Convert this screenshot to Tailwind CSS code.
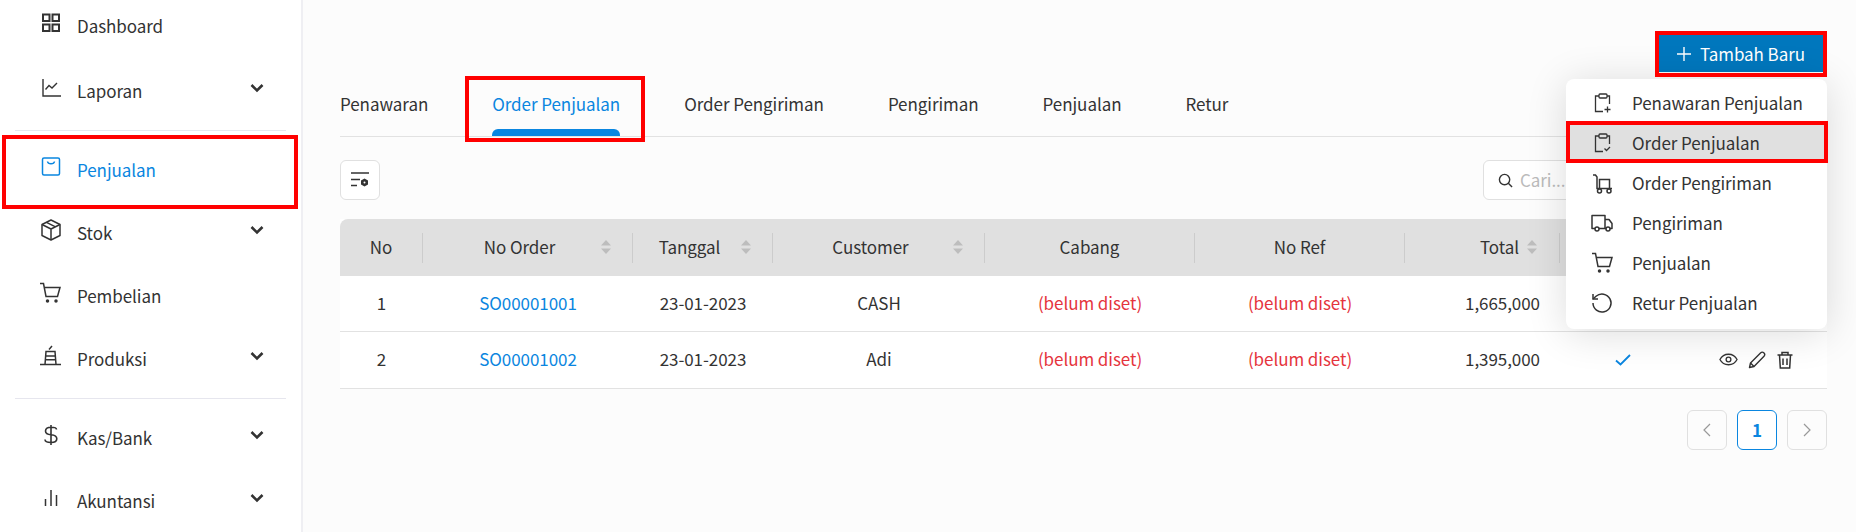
<!DOCTYPE html>
<html lang="id">
<head>
<meta charset="UTF-8">
<title>Order Penjualan</title>
<script src="https://cdn.jsdelivr.net/npm/@tailwindcss/browser@4"></script>
</head>
<body class="h-[532px] w-[1856px] overflow-hidden bg-[#fcfcfc] font-['Noto_Sans_CJK_SC',sans-serif] text-[17px] tracking-[-0.06px] text-[#333333]">
<div class="relative flex h-[532px]">

  <!-- sidebar -->
  <aside class="h-full w-[303px] flex-none overflow-hidden border-r-2 border-[#efeff3] bg-white">
    <nav class="-mt-[6px] px-[15px]">
      <a class="flex h-[63px] items-center pl-[26px]">
        <svg class="mb-[6px] mr-[16px] size-[20px] flex-none" viewBox="0 0 20 20" fill="none" stroke="currentColor" stroke-width="2"><rect x="2" y="1.500" width="6.500" height="6.500"/><rect x="11.500" y="1.500" width="6.500" height="6.500"/><rect x="2" y="11.500" width="6.500" height="6.500"/><rect x="11.500" y="11.500" width="6.500" height="6.500"/></svg>
        <span>Dashboard</span>
      </a>
      <a class="mt-[2px] flex h-[63px] items-center pl-[26px]">
        <svg class="mb-[6px] mr-[16px] size-[20px] flex-none" viewBox="0 0 20 20" fill="none" stroke="currentColor" stroke-width="1.400"><path d="M2 1v17h18"/><path d="M4.500 11.500l3.500-4 3 2.500 5-5"/></svg>
        <span>Laporan</span>
        <svg class="mb-[5px] ml-auto mr-[22px] size-[14px]" viewBox="0 0 14 14" fill="none" stroke="currentColor" stroke-width="2.600"><path d="M1.500 4l5.500 5.500L12.500 4"/></svg>
      </a>
      <div class="mb-[7px] mt-[8px] h-px bg-[#e6e6ee]"></div>
      <a class="flex h-[63px] items-center pl-[26px] text-[#0a86e0]">
        <svg class="mb-[6px] mr-[16px] size-[20px] flex-none" viewBox="0 0 20 20" fill="none" stroke="currentColor" stroke-width="1.500"><rect x="1.500" y="1" width="17" height="17" rx="1.500"/><path d="M6.500 4.500c.5 3 6.500 3 7 0"/></svg>
        <span>Penjualan</span>
      </a>
      <a class="flex h-[63px] items-center pl-[25px]">
        <svg class="mb-[6px] mr-[15px] size-[22px] flex-none" viewBox="0 0 22 22" fill="none" stroke="currentColor" stroke-width="1.500" stroke-linejoin="round"><path d="M11 1l9 4.500v11L11 21l-9-4.500v-11z"/><path d="M2 5.500l9 4.500 9-4.500M11 10v11M6.500 3.300l9 4.500"/></svg>
        <span>Stok</span>
        <svg class="mb-[5px] ml-auto mr-[22px] size-[14px]" viewBox="0 0 14 14" fill="none" stroke="currentColor" stroke-width="2.600"><path d="M1.500 4l5.500 5.500L12.500 4"/></svg>
      </a>
      <a class="flex h-[63px] items-center pl-[24px]">
        <svg class="mb-[6px] mr-[16px] size-[22px] flex-none" viewBox="0 0 22 22" fill="none" stroke="currentColor" stroke-width="1.500"><path d="M1 1.500h3.500l2.500 13h11.500L21 5.500H5"/><circle cx="8.500" cy="19" r="1" fill="currentColor"/><circle cx="17" cy="19" r="1" fill="currentColor"/></svg>
        <span>Pembelian</span>
      </a>
      <a class="flex h-[63px] items-center pl-[25px]">
        <svg class="mb-[6px] mr-[16px] size-[21px] flex-none" viewBox="0 0 21 21" fill="none" stroke="currentColor" stroke-width="1.500"><path d="M0 19.500h21M5 19.500L6 6.500h9l1 13M5.500 11h10M5.500 14.800h10M9 4.500l3-3.500"/></svg>
        <span>Produksi</span>
        <svg class="mb-[5px] ml-auto mr-[22px] size-[14px]" viewBox="0 0 14 14" fill="none" stroke="currentColor" stroke-width="2.600"><path d="M1.500 4l5.500 5.500L12.500 4"/></svg>
      </a>
      <div class="mb-[7px] mt-[8px] h-px bg-[#e6e6ee]"></div>
      <a class="flex h-[63px] items-center pl-[26px]">
        <svg class="mb-[6px] mr-[16px] size-[20px] flex-none" viewBox="0 0 20 20" fill="none" stroke="currentColor" stroke-width="1.600"><path d="M10 0v20M15.500 4.500c0-1.500-2-2.200-5.500-2.200S4.500 3.300 4.500 6s2 3.500 5.500 3.800 5.800 1.300 5.800 4-2.300 3.700-5.800 3.700-6-1-6-3"/></svg>
        <span>Kas/Bank</span>
        <svg class="mb-[5px] ml-auto mr-[22px] size-[14px]" viewBox="0 0 14 14" fill="none" stroke="currentColor" stroke-width="2.600"><path d="M1.500 4l5.500 5.500L12.500 4"/></svg>
      </a>
      <a class="flex h-[63px] items-center pl-[26px]">
        <svg class="mb-[6px] mr-[16px] size-[20px] flex-none" viewBox="0 0 20 20" fill="none" stroke="currentColor" stroke-width="1.500"><path d="M4.500 11v7M10 2v16M15.500 7v11"/></svg>
        <span>Akuntansi</span>
        <svg class="mb-[5px] ml-auto mr-[22px] size-[14px]" viewBox="0 0 14 14" fill="none" stroke="currentColor" stroke-width="2.600"><path d="M1.500 4l5.500 5.500L12.500 4"/></svg>
      </a>
    </nav>
  </aside>

  <!-- main -->
  <main class="min-w-0 flex-1 pl-[37px] pr-[29px] pt-[35px]">
    <div class="flex justify-end pr-[4px]">
      <button class="flex h-[37px] w-[164px] items-center justify-center gap-[9px] bg-[#0077bd] text-[#ffffff]">
        <svg class="size-[14px]" viewBox="0 0 14 14" stroke="currentColor" stroke-width="1.400"><path d="M7 0v14M0 7h14"/></svg>
        Tambah Baru
      </button>
    </div>

    <div class="mt-[12px] flex h-[53px] gap-[64px] border-b border-[#e2e2e2]">
      <a class="flex items-center pb-[13px]">Penawaran</a>
      <a class="relative flex items-center pb-[13px] text-[#0a86e0]">Order Penjualan<span class="absolute inset-x-0 bottom-0 h-[7px] rounded-t-[6px] bg-[#0a86e0]"></span></a>
      <a class="flex items-center pb-[13px]">Order Pengiriman</a>
      <a class="flex items-center pb-[13px]">Pengiriman</a>
      <a class="flex items-center pb-[13px]">Penjualan</a>
      <a class="flex items-center pb-[13px]">Retur</a>
    </div>

    <div class="mt-[23px] flex h-[40px] items-center justify-between">
      <button class="flex size-[40px] items-center justify-center rounded-[6px] border border-[#e0e0e0] bg-white">
        <svg class="size-[20px]" viewBox="0 0 20 20" fill="none" stroke="currentColor" stroke-width="1.300"><path d="M1 3h18M1 9.500h9M1 15.500h6"/><path d="M14.500 8.500l3.500 2v4l-3.500 2-3.500-2v-4z" fill="currentColor" stroke="none"/><circle cx="14.500" cy="12.500" r="1" fill="#ffffff" stroke="none"/></svg>
      </button>
      <div class="mr-[104px] flex h-[40px] w-[240px] items-center gap-[7px] rounded-[6px] border border-[#e0e0e0] bg-white pl-[14px] text-[#bbbbbb]">
        <svg class="size-[15px] text-[#333333]" viewBox="0 0 16 16" fill="none" stroke="currentColor" stroke-width="1.500"><circle cx="7" cy="7" r="5.500"/><path d="M11 11l4 4"/></svg>
        Cari...
      </div>
    </div>

    <table class="mt-[19px] w-[1487px] table-fixed border-collapse bg-white">
      <colgroup>
        <col class="w-[83px]"><col class="w-[210px]"><col class="w-[140px]"><col class="w-[212px]"><col class="w-[210px]"><col class="w-[210px]"><col class="w-[155px]"><col class="w-[126px]"><col class="w-[141px]">
      </colgroup>
      <thead class="bg-[#e0e0e0]">
        <tr class="h-[57px]">
          <th class="rounded-tl-[8px] font-normal"><div class="flex h-[30px] items-center justify-center border-r border-[#cccccc] pb-[2px]">No</div></th>
          <th class="font-normal"><div class="flex h-[30px] items-center border-r border-[#cccccc] pb-[2px] pl-[16px] pr-[20px]"><span class="flex-1 text-center">No Order</span>
            <svg class="h-[16px] w-[12px]" viewBox="0 0 12 16" fill="#bdbdbd"><path d="M6 1l5 5.500H1zM6 15l5-5.500H1z"/></svg></div></th>
          <th class="font-normal"><div class="flex h-[30px] items-center border-r border-[#cccccc] pb-[2px] pl-[6px] pr-[20px]"><span class="flex-1 text-center">Tanggal</span>
            <svg class="h-[16px] w-[12px]" viewBox="0 0 12 16" fill="#bdbdbd"><path d="M6 1l5 5.500H1zM6 15l5-5.500H1z"/></svg></div></th>
          <th class="font-normal"><div class="flex h-[30px] items-center border-r border-[#cccccc] pb-[2px] pl-[16px] pr-[20px]"><span class="flex-1 text-center">Customer</span>
            <svg class="h-[16px] w-[12px]" viewBox="0 0 12 16" fill="#bdbdbd"><path d="M6 1l5 5.500H1zM6 15l5-5.500H1z"/></svg></div></th>
          <th class="font-normal"><div class="flex h-[30px] items-center justify-center border-r border-[#cccccc] pb-[2px]">Cabang</div></th>
          <th class="font-normal"><div class="flex h-[30px] items-center justify-center border-r border-[#cccccc] pb-[2px]">No Ref</div></th>
          <th class="font-normal"><div class="flex h-[30px] items-center justify-end gap-[7px] border-r border-[#cccccc] pb-[2px] pr-[21px]">Total
            <svg class="h-[16px] w-[12px]" viewBox="0 0 12 16" fill="#bdbdbd"><path d="M6 1l5 5.500H1zM6 15l5-5.500H1z"/></svg></div></th>
          <th></th>
          <th class="rounded-tr-[8px]"></th>
        </tr>
      </thead>
      <tbody>
        <tr class="h-[55px] border-b border-[#e2e2e2] text-center">
          <td class="pb-[2px]">1</td>
          <td class="pb-[2px] text-[#0a86e0]">SO00001001</td>
          <td class="pb-[2px]">23-01-2023</td>
          <td class="pb-[2px]">CASH</td>
          <td class="pb-[2px] text-[#e5343d]">(belum diset)</td>
          <td class="pb-[2px] text-[#e5343d]">(belum diset)</td>
          <td class="pb-[2px] pr-[20px] text-right">1,665,000</td>
          <td></td>
          <td></td>
        </tr>
        <tr class="h-[57px] border-b border-[#e2e2e2] text-center">
          <td class="pb-[2px]">2</td>
          <td class="pb-[2px] text-[#0a86e0]">SO00001002</td>
          <td class="pb-[2px]">23-01-2023</td>
          <td class="pb-[2px]">Adi</td>
          <td class="pb-[2px] text-[#e5343d]">(belum diset)</td>
          <td class="pb-[2px] text-[#e5343d]">(belum diset)</td>
          <td class="pb-[2px] pr-[20px] text-right">1,395,000</td>
          <td><svg class="mx-auto size-[16px] text-[#0a86e0]" viewBox="0 0 16 16" fill="none" stroke="currentColor" stroke-width="1.800"><path d="M1 8.500l4.500 4L15 3"/></svg></td>
          <td>
            <div class="flex items-center justify-center gap-[10px]">
              <svg class="size-[19px]" viewBox="0 0 20 20" fill="none" stroke="currentColor" stroke-width="1.400"><path d="M1 10c2-3.800 5-5.500 9-5.500s7 1.700 9 5.500c-2 3.800-5 5.500-9 5.500S3 13.800 1 10z"/><circle cx="10" cy="10" r="2.500"/></svg>
              <svg class="size-[18px]" viewBox="0 0 18 18" fill="none" stroke="currentColor" stroke-width="1.400" stroke-linejoin="round"><path d="M1.500 16.500l1-4.500L12.500 2c1-1 2.500-1 3.500 0s.8 2.300 0 3.200L6 15.500z"/><path d="M2.500 12l3.500 3.500"/></svg>
              <svg class="size-[18px]" viewBox="0 0 18 18" fill="none" stroke="currentColor" stroke-width="1.500"><path d="M1.500 4h15M6 4V1.500h6V4M3.500 4l.8 13h9.400l.8-13M7 7.500v6.500M11 7.500v6.500"/></svg>
            </div>
          </td>
        </tr>
      </tbody>
    </table>

    <div class="mt-[21px] flex justify-end gap-[10px]">
      <button class="flex size-[40px] items-center justify-center rounded-[6px] border border-[#e0e0e0] text-[#999999]">
        <svg class="size-[14px]" viewBox="0 0 14 14" fill="none" stroke="currentColor" stroke-width="1.200"><path d="M10 1L4 7l6 6"/></svg>
      </button>
      <button class="flex size-[40px] items-center justify-center rounded-[6px] border border-[#0a86e0] bg-white font-semibold text-[#0a86e0]">1</button>
      <button class="flex size-[40px] items-center justify-center rounded-[6px] border border-[#e0e0e0] text-[#999999]">
        <svg class="size-[14px]" viewBox="0 0 14 14" fill="none" stroke="currentColor" stroke-width="1.200"><path d="M4 1l6 6-6 6"/></svg>
      </button>
    </div>
  </main>

  <!-- dropdown menu -->
  <div class="absolute left-[1566px] top-[79px] w-[261px] rounded-[8px] bg-white pb-[6px] pt-[4px] shadow-[0_4px_40px_rgba(0,0,0,0.14)]">
    <a class="flex h-[40px] items-center pl-[27px]">
      <svg class="mr-[19px] size-[20px] flex-none" viewBox="0 0 20 20" fill="none" stroke="currentColor" stroke-width="1.300"><path d="M6 3H2.500v15.500H10M14 3h2.500v8"/><rect x="6" y="1" width="8" height="4" rx="1"/><path d="M14.500 13.500v6M11.500 16.500h6"/></svg>
      Penawaran Penjualan
    </a>
    <a class="flex h-[40px] items-center bg-[#e0e0e0] pl-[27px]">
      <svg class="mr-[19px] size-[20px] flex-none" viewBox="0 0 20 20" fill="none" stroke="currentColor" stroke-width="1.300"><path d="M6 3H2.500v15.500H10M14 3h2.500v8"/><rect x="6" y="1" width="8" height="4" rx="1"/><path d="M11.500 15.500l2 2 3.500-3.500"/></svg>
      Order Penjualan
    </a>
    <a class="flex h-[40px] items-center pl-[26px]">
      <svg class="mr-[19px] size-[21px] flex-none" viewBox="0 0 21 21" fill="none" stroke="currentColor" stroke-width="1.500"><path d="M1 2h2.500l1.500 2v11.500h15"/><path d="M7.500 15V6.500h10V15"/><circle cx="7.500" cy="18" r="2"/><circle cx="17" cy="18" r="2"/></svg>
      Order Pengiriman
    </a>
    <a class="flex h-[40px] items-center pl-[25px]">
      <svg class="mr-[19px] size-[22px] flex-none" viewBox="0 0 22 22" fill="none" stroke="currentColor" stroke-width="1.500" stroke-linejoin="round"><path d="M4 16.500H1V3.500h13v13H8M14 7.500h4l3 4v5h-2M14 16.500h1"/><circle cx="6" cy="17" r="2"/><circle cx="17" cy="17" r="2"/></svg>
      Pengiriman
    </a>
    <a class="flex h-[40px] items-center pl-[25px]">
      <svg class="mr-[19px] size-[22px] flex-none" viewBox="0 0 22 22" fill="none" stroke="currentColor" stroke-width="1.500"><path d="M1 1.500h3.500l2.500 13h11.500L21 5.500H5"/><circle cx="8.500" cy="19" r="1" fill="currentColor"/><circle cx="17" cy="19" r="1" fill="currentColor"/></svg>
      Penjualan
    </a>
    <a class="flex h-[40px] items-center pl-[25px]">
      <svg class="mr-[19px] size-[22px] flex-none" viewBox="0 0 22 22" fill="none" stroke="currentColor" stroke-width="1.500"><path d="M2 11a9 9 0 1 0 3-6.700L2 7"/><path d="M2 2v5h5"/></svg>
      Retur Penjualan
    </a>
  </div>

  <!-- red annotation boxes -->
  <div class="pointer-events-none absolute left-[2px] top-[135px] h-[74px] w-[296px] border-4 border-[#ff0000]"></div>
  <div class="pointer-events-none absolute left-[465px] top-[76px] h-[66px] w-[180px] border-4 border-[#ff0000]"></div>
  <div class="pointer-events-none absolute left-[1655px] top-[31px] h-[46px] w-[172px] border-4 border-[#ff0000]"></div>
  <div class="pointer-events-none absolute left-[1566px] top-[121px] h-[42px] w-[262px] border-4 border-[#ff0000]"></div>
</div>
</body>
</html>
